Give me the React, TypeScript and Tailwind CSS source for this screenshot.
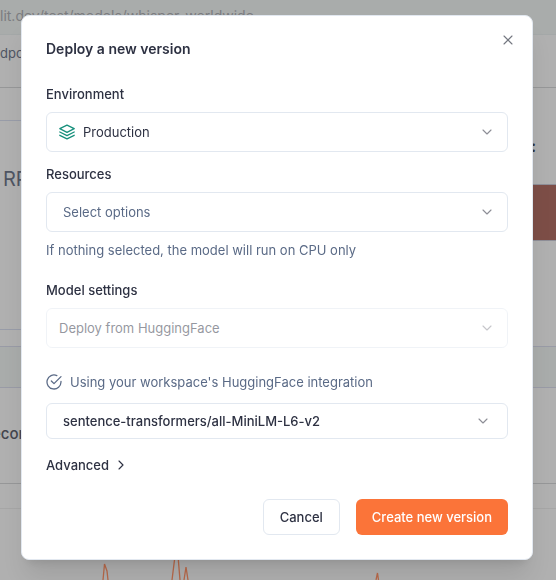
import { ReactNode } from "react";
import { ChevronDown, ChevronRight, X } from "lucide-react";

function LayersIcon() {
  return (
    <svg
      viewBox="0 0 16 16"
      className="pointer-events-none absolute left-[13px] size-4 text-[#17907c]"
      fill="none"
      stroke="currentColor"
      strokeWidth="1.3"
      strokeLinecap="round"
      strokeLinejoin="round"
      aria-hidden="true"
    >
      <path d="M8 1.1 15.200 4.700 8 8.300 0.800 4.700Z" />
      <path d="m0.800 8 7.200 3.600L15.200 8" />
      <path d="m0.800 11.300 7.200 3.600 7.200-3.600" />
    </svg>
  );
}

function CheckIcon() {
  return (
    <svg
      viewBox="0 0 24 24"
      className="size-4 text-[#5a6a86]"
      fill="none"
      stroke="currentColor"
      strokeWidth="1.900"
      strokeLinecap="round"
      strokeLinejoin="round"
      aria-hidden="true"
    >
      <path d="M22.500 11v1a10.500 10.500 0 1 1-6.200-9.600" />
      <path d="m8 10.500 4 4L22.500 4" />
    </svg>
  );
}

type FieldProps = {
  id: string;
  label: string;
  value: string;
  className: string;
  icon?: ReactNode;
  disabled?: boolean;
};

function Field({ id, label, value, className, icon, disabled }: FieldProps) {
  return (
    <div className="flex flex-col gap-2">
      <label htmlFor={id} className="font-medium">
        {label}
      </label>
      <div className={disabled ? "relative flex items-center opacity-50" : "relative flex items-center"}>
        {icon}
        <select
          id={id}
          disabled={disabled}
          className={`h-10 w-full appearance-none rounded-md border border-[#e2e8f0] bg-white pr-10 ${className}`}
        >
          <option>{value}</option>
        </select>
        <ChevronDown
          className="pointer-events-none absolute right-[13px] size-4 text-[#8d8e96]"
          strokeWidth={1.7}
        />
      </div>
    </div>
  );
}

function Page() {
  return (
    <div className="flex min-h-screen flex-col overflow-hidden bg-[#b0b0b0] text-[#4f5563]" aria-hidden="true">
      <div className="h-[35px] shrink-0 border-b border-[#a4a8a8] bg-[#a9acab] pt-1.5 text-sm leading-5 text-[#7b7c80]">
        lit.dev/test/models/whisper-worldwide
      </div>
      <div className="h-[53px] shrink-0 border-b border-[#969798] pt-2">dpo</div>
      <div className="flex h-[258px] shrink-0 items-start justify-between pt-8">
        <div className="h-[210px] w-1/2 border-y border-[#989ca8] pt-11 pl-[3px] text-xl">RPS</div>
        <div className="flex w-1/3 flex-col pt-4 text-right">
          <span className="pr-5 text-base leading-5 font-semibold text-[#303036]">Status:</span>
          <div className="mt-7 h-[57px] border-y border-[#8f8f98] bg-[#7d4e47]" />
        </div>
      </div>
      <div className="h-[42px] shrink-0 border-y border-[#999ba6] bg-[#a9acab]" />
      <div className="h-24 shrink-0 border-b border-[#969798] pt-9 text-[15px] leading-5 font-medium text-[#44464e]">
        <span className="-ml-2">econds</span>
      </div>
      <div className="h-[25px] shrink-0 border-b border-[#a6a6a6]" />
      <div className="flex flex-1 items-end">
        <svg width="556" height="34" fill="none" stroke="#b8694a" strokeWidth="1.3" className="shrink-0">
          <path d="M103 34 104.500 18 107 25 108 34M172 34 175 10 178 10 180 34M184 34 186 21 188 34M376 34 377.500 27 378.500 34" />
        </svg>
      </div>
    </div>
  );
}

export default function App() {
  return (
    <div className="font-['Inter',sans-serif] text-[13px] leading-5 text-[#2d3142]">
      <Page />
      <div className="fixed inset-0 flex items-start justify-center pt-[15px] pr-0.5">
        <form
          role="dialog"
          aria-labelledby="title"
          className="relative flex w-full max-w-lg flex-col rounded-lg border border-[#e2e8f0] bg-white p-6 shadow-xl"
        >
          <h2 id="title" className="text-sm leading-[18px] font-semibold">
            Deploy a new version
          </h2>
          <button type="button" aria-label="Close" className="absolute top-4 right-4 text-[#747780]">
            <X className="size-4" strokeWidth={1.7} />
          </button>
          <div className="mt-[26px] flex flex-col gap-3">
            <Field id="environment" label="Environment" value="Production" className="pl-9" icon={<LayersIcon />} />
            <Field id="resources" label="Resources" value="Select options" className="pl-4 text-[#5a6a86]" />
          </div>
          <p className="mt-2 mb-5 text-[#5a6a86]">If nothing selected, the model will run on CPU only</p>
          <Field id="source" label="Model settings" value="Deploy from HuggingFace" className="pl-3" disabled />
          <p className="mt-6 flex items-center gap-2 text-[#5a6a86]">
            <CheckIcon />
            Using your workspace's HuggingFace integration
          </p>
          <button
            type="button"
            className="mt-[11px] flex h-9 items-center justify-between rounded-md border border-[#e2e8f0] px-4 font-medium"
          >
            sentence-transformers/all-MiniLM-L6-v2
            <ChevronDown className="size-4 text-[#8d8e96]" strokeWidth={1.7} />
          </button>
          <button type="button" className="mt-4 flex items-center gap-1 self-start font-medium">
            Advanced
            <ChevronRight className="size-4" strokeWidth={1.7} />
          </button>
          <div className="mt-6 flex justify-end gap-4">
            <button type="button" className="h-9 rounded-md border border-[#e2e8f0] px-4 font-medium">
              Cancel
            </button>
            <button type="submit" className="h-9 rounded-md bg-[#fb7439] px-4 font-medium text-white">
              Create new version
            </button>
          </div>
        </form>
      </div>
    </div>
  );
}
